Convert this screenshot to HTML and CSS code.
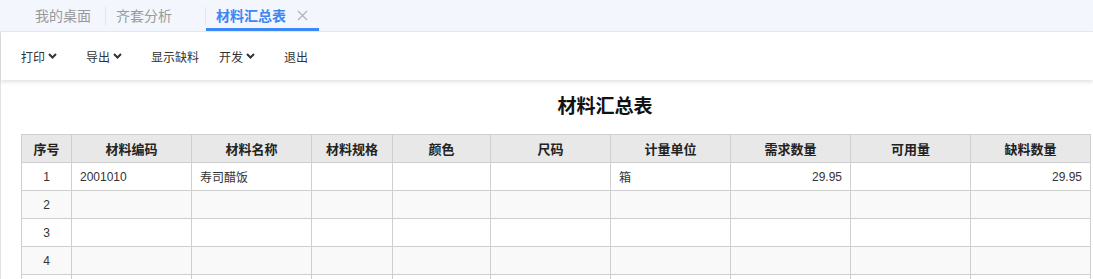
FILE: index.html
```html
<!DOCTYPE html>
<html lang="zh-CN">
<head>
  <meta charset="UTF-8" />
  <title>材料汇总表</title>
  <link rel="stylesheet" href="styles.css">
</head>
<body>

  <div class="tab-bar">
    <div class="tab tab-first">我的桌面</div>
    <span class="tab-sep"></span>
    <div class="tab">齐套分析<span class="tab-close hidden"></span></div>
    <span class="tab-sep"></span>
    <div class="tab active">材料汇总表
      <svg class="tab-close" width="11" height="11" viewBox="0 0 11 11">
        <path d="M1 1 L10 10 M10 1 L1 10" stroke="#b5b5b5" stroke-width="1.4" fill="none" />
      </svg>
    </div>
  </div>

  <div class="page">
    <div class="toolbar">
      <div class="tool">打印
        <svg class="chev" width="9" height="6" viewBox="0 0 9 6"><path d="M1 1 L4.5 4.5 L8 1" stroke="#333" stroke-width="2" fill="none" /></svg>
      </div>
      <div class="tool">导出
        <svg class="chev" width="9" height="6" viewBox="0 0 9 6"><path d="M1 1 L4.5 4.5 L8 1" stroke="#333" stroke-width="2" fill="none" /></svg>
      </div>
      <div class="tool plain">显示缺料</div>
      <div class="tool">开发
        <svg class="chev" width="9" height="6" viewBox="0 0 9 6"><path d="M1 1 L4.5 4.5 L8 1" stroke="#333" stroke-width="2" fill="none" /></svg>
      </div>
      <div class="tool plain">退出</div>
    </div>

    <div class="content">
      <h1 class="report-title">材料汇总表</h1>

      <table class="report">
        <colgroup>
          <col style="width:50px">
          <col style="width:120px">
          <col style="width:120px">
          <col style="width:81px">
          <col style="width:98px">
          <col style="width:120px">
          <col style="width:120px">
          <col style="width:120px">
          <col style="width:120px">
          <col style="width:120px">
        </colgroup>
        <thead>
          <tr>
            <th>序号</th>
            <th>材料编码</th>
            <th>材料名称</th>
            <th>材料规格</th>
            <th>颜色</th>
            <th>尺码</th>
            <th>计量单位</th>
            <th>需求数量</th>
            <th>可用量</th>
            <th>缺料数量</th>
          </tr>
        </thead>
        <tbody>
          <tr>
            <td class="c">1</td>
            <td>2001010</td>
            <td>寿司醋饭</td>
            <td></td>
            <td></td>
            <td></td>
            <td>箱</td>
            <td class="r">29.95</td>
            <td></td>
            <td class="r">29.95</td>
          </tr>
          <tr>
            <td class="c">2</td>
            <td></td><td></td><td></td><td></td><td></td><td></td><td></td><td></td><td></td>
          </tr>
          <tr>
            <td class="c">3</td>
            <td></td><td></td><td></td><td></td><td></td><td></td><td></td><td></td><td></td>
          </tr>
          <tr>
            <td class="c">4</td>
            <td></td><td></td><td></td><td></td><td></td><td></td><td></td><td></td><td></td>
          </tr>
          <tr>
            <td class="c"></td>
            <td></td><td></td><td></td><td></td><td></td><td></td><td></td><td></td><td></td>
          </tr>
        </tbody>
      </table>
    </div>
  </div>

</body>
</html>
```

FILE: styles.css
```css
body {
  margin: 0;
  padding: 0;
  background: #fff;
  font-family: "Liberation Sans", "Noto Sans CJK SC", sans-serif;
  color: #333;
  overflow: hidden;
}

.tab-bar {
  height: 32px;
  box-sizing: border-box;
  background: #f3f6fc;
  border-bottom: 1px solid #e6eaf1;
  display: flex;
  align-items: stretch;
  padding-left: 21px;
}

.tab {
  display: flex;
  align-items: center;
  padding: 0 11px 0 10px;
  font-size: 14px;
  color: #999;
  box-sizing: border-box;
  border-bottom: 3px solid transparent;
  padding-top: 2px;
}

.tab-first {
  padding: 2px 14px 0;
}

.tab.active {
  color: #3d86f4;
  border-bottom-color: #3d8af7;
  font-weight: bold;
}

.tab-sep {
  width: 1px;
  height: 18px;
  align-self: center;
  background: #e2e5ea;
}

.tab-close {
  width: 11px;
  height: 11px;
  margin-left: 11px;
  display: inline-block;
}

.tab-close.hidden {
  visibility: hidden;
}

.page {
  border-left: 1px solid #e2e2e2;
}

.toolbar {
  height: 48px;
  display: flex;
  align-items: center;
  gap: 20px;
  padding-left: 20px;
  background: #fff;
  box-shadow: 0 2px 4px rgba(0, 0, 0, 0.12);
  position: relative;
}

.tool {
  display: flex;
  align-items: center;
  font-size: 12px;
  color: #333;
  padding-right: 9px;
  cursor: pointer;
}

.tool.plain {
  padding-right: 0;
}

.chev {
  margin-left: 3px;
}

.content {
  padding: 13px 0 0 20px;
}

.report-title {
  margin: 0 0 13px;
  padding-left: 98px;
  font-size: 19px;
  line-height: 28px;
  text-align: center;
  color: #111;
  font-weight: bold;
  width: 1070px;
  box-sizing: border-box;
}

.report {
  border-collapse: collapse;
  table-layout: fixed;
  width: 1070px;
  font-size: 12px;
}

.report th,
.report td {
  border: 1px solid #cfcfcf;
  height: 28px;
  padding: 0 8px;
  box-sizing: border-box;
}

.report th {
  background: #e8e8e8;
  color: #222;
  font-size: 13px;
  font-weight: bold;
  text-align: center;
}

.report td {
  color: #333;
  text-align: left;
}

.report tbody tr:nth-child(even) td {
  background: #f9f9f9;
}

.report td.c {
  text-align: center;
}

.report td.r {
  text-align: right;
}
```
